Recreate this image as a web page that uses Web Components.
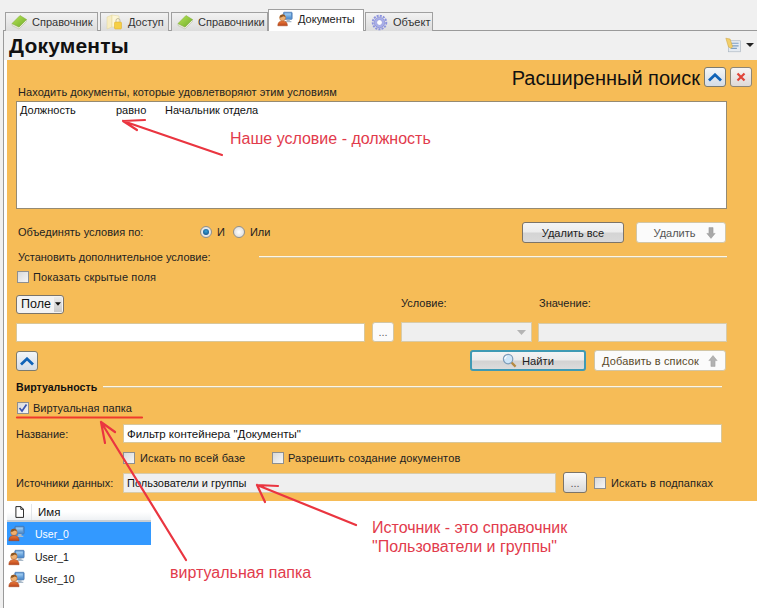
<!DOCTYPE html>
<html><head><meta charset="utf-8"><style>
html,body{margin:0;padding:0;background:#fff}
body{width:757px;height:608px;overflow:hidden;position:relative;font:11px "Liberation Sans",Arial,sans-serif;color:#222}
</style></head><body>
<x-app></x-app>
<script>
const USER=(w,h)=>`<svg width="${w}" height="${h}" viewBox="0 0 20 19"><defs><linearGradient id="sc" x1="0" y1="0" x2="0" y2="1"><stop offset="0" stop-color="#a8d3f5"/><stop offset="1" stop-color="#4f8fd0"/></linearGradient><linearGradient id="bd" x1="0" y1="0" x2="0" y2="1"><stop offset="0" stop-color="#ec7b3c"/><stop offset="1" stop-color="#b8441a"/></linearGradient></defs><rect x="8" y="1" width="11" height="9" rx="1" fill="#5d93cf" stroke="#3b6ea8" stroke-width=".7"/><rect x="9.500" y="2.500" width="8" height="6" fill="url(#sc)"/><path d="M12 10h4v2h2v1.500H10V12h2z" fill="#a9b9c8"/><circle cx="7" cy="8" r="3.800" fill="#efb071" stroke="#b4652a" stroke-width=".6"/><path d="M3.200 7.500A3.800 3.800 0 0 1 10.700 7L8 6 5 7.500z" fill="#8a5522"/><path d="M1 18c0-4.500 2.500-6 6-6s6 1.500 6 6z" fill="url(#bd)" stroke="#a4431a" stroke-width=".6"/></svg>`;
const ICON={
 book:`<svg width="16" height="16" viewBox="0 0 16 16"><defs><linearGradient id="gb" x1="0" y1="0" x2="1" y2="1"><stop offset="0" stop-color="#b9e457"/><stop offset="1" stop-color="#6fae2a"/></linearGradient></defs><path d="M1 9.500v2l7 3.500 7.500-7.500V5.500L8 13z" fill="#e9ecd9" stroke="#b3b9a0" stroke-width=".5"/><path d="M1 9.500 9 1.500l6.500 4L8 13z" fill="url(#gb)" stroke="#7cab33" stroke-width=".5"/></svg>`,
 key:`<svg width="17" height="18" viewBox="0 0 17 18"><path d="M1 4 6 2v12l-5 2z" fill="#f8edc2" stroke="#e3d499" stroke-width=".5"/><path d="M6 2l7 1v11l-7 0z" fill="#fdf6d6" stroke="#e3d499" stroke-width=".5"/><rect x="8.500" y="9" width="7" height="7" rx="1" fill="#f6cf45" stroke="#dba925" stroke-width=".5"/><path d="M10 9V7.500a2 2 0 0 1 4 0V9" fill="none" stroke="#c4bd9f" stroke-width="1"/></svg>`,
 user:USER(16,16),
 gear:`<svg width="17" height="17" viewBox="0 0 18 18"><circle cx="9" cy="9" r="7.200" fill="none" stroke="#8c92de" stroke-width="2" stroke-dasharray="2.200 1.200"/><circle cx="9" cy="9" r="5.600" fill="#a9afea" stroke="#777dcc" stroke-width=".6"/><circle cx="9" cy="9" r="3" fill="#fdfdff" stroke="#8388d0" stroke-width=".6"/></svg>`,
 up:`<svg width="14" height="9" viewBox="0 0 14 9"><path d="M1 7.500 7 1.800l6 5.700" fill="none" stroke="#0f63b8" stroke-width="2.800" stroke-linejoin="miter"/></svg>`,
 close:`<svg width="10" height="10" viewBox="0 0 10 10"><path d="M1.500 1.500l7 7M8.500 1.500l-7 7" stroke="#e0453a" stroke-width="2.200"/></svg>`,
 down:`<svg width="10" height="14" viewBox="0 0 12 15"><path d="M3.500 1h5v7h2.500l-5 6-5-6h2.500z" fill="#a8a8a8" stroke="#8f8f8f" stroke-width=".5"/></svg>`,
 upg:`<svg width="10" height="14" viewBox="0 0 12 15"><path d="M3.500 14h5V7h2.500L6 1 1 7h2.500z" fill="#b2b2b2" stroke="#979797" stroke-width=".5"/></svg>`,
 mag:`<svg width="15" height="15" viewBox="0 0 16 16"><circle cx="6.500" cy="6.500" r="5" fill="#cfe6f8" stroke="#7d9cb8" stroke-width="1.300"/><path d="M5 3.500a3.500 3.500 0 0 0-2 3" fill="none" stroke="#fff" stroke-width="1.200"/><path d="M10.300 10.300 14.500 14.500" stroke="#b58a42" stroke-width="2.400"/></svg>`,
 doc:`<svg width="9" height="12" viewBox="0 0 10 13"><path d="M1 .5h5.500L9.500 3.500V12.500H1z" fill="#fff" stroke="#111"/><path d="M6.500.5v3h3" fill="none" stroke="#111"/></svg>`,
 note:`<svg width="17" height="16" viewBox="0 0 20 18"><rect x="4" y="4" width="14" height="13" fill="#e5ebf1" stroke="#a5b1bd" stroke-width=".7"/><path d="M7 7h9M7 10h9M7 13h7" stroke="#7da0c4" stroke-width="1.300"/><path d="M1 1l5 1 3 9-2 2-3-2z" fill="#f2cf6a" stroke="#cda23e" stroke-width=".6"/></svg>`
};
function el(name,css,html,render){
 customElements.define(name,class extends HTMLElement{
  connectedCallback(){
   if(this.shadowRoot)return;
   const s=this.attachShadow({mode:"open"});
   s.innerHTML=`<style>${css}</style>`+(render?render(this):html);
  }
 });
}
el("x-tab",`:host{display:flex;align-items:center;box-sizing:border-box;height:19px;padding-left:5px;gap:5px;border:1px solid #a0a0a0;border-bottom:0;background:linear-gradient(#f2f2f2,#dcdcdc);color:#333;font-size:11px;position:relative}
:host([active]){height:22px;background:#fff;color:#222;padding-bottom:3px;padding-left:8px;gap:5px;z-index:1}
svg{flex:none}`,"",h=>ICON[h.getAttribute("icon")]+`<span><slot></slot></span>`);
el("x-btn",`:host{display:inline-flex;align-items:center;justify-content:center;box-sizing:border-box;gap:var(--g,8px);border:1px solid #a9a9a9;border-radius:3px;background:linear-gradient(#fdfdfd,#f1f1f1);color:#444;font-size:11px;flex:none}
:host([v=dark]){border-color:#7c7468;background:linear-gradient(#f4f4f4 0,#ececec 48%,#d4d4d4 52%,#d9d9d9);color:#222}
:host([v=focus]){border:2px solid #3f9ab4;background:linear-gradient(#f4f4f4 0,#ececec 48%,#d2d2d2 52%,#dcdcdc);color:#222}
:host([v=light]){border-color:#d2c6a6;background:#fbfbfb;color:#555}
:host([v=icon]){border-color:#7b7b6f;background:linear-gradient(#f3f6f9,#d4dce6)}
:host([v=iconx]){border-color:#8d8677;background:linear-gradient(#f7f5f4,#ded9d8)}
:host([v=dots]){border-color:#7c7468;background:linear-gradient(#fafafa,#d9d9d9)}
span{white-space:nowrap}`,`<slot></slot>`);
el("x-check",`:host{display:inline-flex;align-items:center;gap:var(--cg,4px);color:#222;white-space:nowrap;letter-spacing:var(--cs,.12px)}
i{box-sizing:border-box;width:12px;height:12px;border:1px solid #8e8f8f;background:linear-gradient(135deg,#d9d9d9,#f6f6f6);display:flex;flex:none;align-items:center;justify-content:center}`,"",
h=>`<i>${h.hasAttribute("checked")?`<svg width="10" height="10" viewBox="0 0 10 10"><path d="M1.500 5 4 8l4.500-6.500" fill="none" stroke="#3a55b0" stroke-width="1.700"/></svg>`:""}</i><span><slot></slot></span>`);
el("x-radio",`:host{display:inline-flex;align-items:center;gap:5px;color:#222}
i{box-sizing:border-box;width:12px;height:12px;border-radius:50%;border:1px solid #8e8f8f;background:radial-gradient(#fff,#d5d5d5);display:flex;align-items:center;justify-content:center}
b{width:6px;height:6px;border-radius:50%;background:radial-gradient(circle at 50% 40%,#38a3d8,#0b3f7a)}`,"",
h=>`<i>${h.hasAttribute("checked")?"<b></b>":""}</i><span><slot></slot></span>`);
el("x-field",`:host{display:flex;align-items:center;box-sizing:border-box;border:1px solid #d9c79a;background:#fff;padding:0 3px;color:#222;white-space:nowrap;height:19px;flex:none}
:host([off]){background:#efefef;border-color:#d8cba9}`,`<slot></slot>`);
el("x-row",`:host{display:flex;align-items:center;box-sizing:border-box;white-space:nowrap}`,`<slot></slot>`);
el("x-rule",`:host{display:block;height:2px;flex:none;background:#fdf6e6;border-bottom:1px solid #d8c595;box-sizing:border-box}`,``);
el("x-search",`:host{display:block;box-sizing:border-box;width:750px;height:441px;background:#f6bc57;padding:7px 0 0 9px;color:#222}
.title{font-size:20px;color:#111;margin-left:auto;margin-right:4px;line-height:23px}
.list{box-sizing:border-box;width:711px;height:108px;background:#fff;border:1px solid #958a72;padding:2px 3px;position:relative;color:#111;display:flex;align-items:flex-start}
.list span{display:inline-block;flex:none}
.sp{flex:1}
.drop{width:9px;height:15px;background:linear-gradient(#ececec,#c9c9c9);display:flex;align-items:center;justify-content:center;margin-left:auto}
`,`
<x-row style="height:23px;margin-bottom:-4px;width:736px;align-items:flex-start"><span class="title">Расширенный поиск</span><x-btn v="icon" style="width:22px;height:20px">${ICON.up}</x-btn><x-btn v="iconx" style="width:22px;height:20px;margin-left:4px">${ICON.close}</x-btn></x-row>
<x-row style="height:12px;padding-left:2px;margin-bottom:3px;letter-spacing:.07px"><span>Находить документы, которые удовлетворяют этим условиям</span></x-row>
<div class="list"><span style="width:96px">Должность</span><span style="width:49px">равно</span><span>Начальник отдела</span></div>
<x-row style="height:21px;margin-top:13px;width:710px;padding-left:2px"><span style="width:182px;margin-top:-2px">Объединять условия по:</span><x-radio checked style="margin-top:-2px">И</x-radio><x-radio style="margin:-2px 0 0 8px">Или</x-radio><span class="sp"></span><x-btn v="dark" style="width:102px;height:21px">Удалить все</x-btn><x-btn v="light" style="width:90px;height:21px;margin-left:12px;--g:10px;padding-left:7px">Удалить ${ICON.down}</x-btn></x-row>
<x-row style="height:14px;margin-top:7px;width:711px;padding-left:2px"><span style="width:241px">Установить дополнительное условие:</span><x-rule style="flex:1"></x-rule></x-row>
<x-row style="height:14px;margin-top:6px;padding-left:1px"><x-check>Показать скрытые поля</x-check></x-row>
<x-row style="height:20px;margin-top:10px"><x-btn v="dark" style="width:48px;height:19px;background:#f3f3f3;font-size:12.500px;color:#111;justify-content:flex-start;padding:0 1px 0 4px;gap:3px">Поле <span class="drop"><svg width="6" height="4" viewBox="0 0 7 4"><path d="M0 0h7L3.500 4z" fill="#111"/></svg></span></x-btn><span style="margin:0 0 3px 337px;width:138px">Условие:</span><span style="margin-bottom:3px">Значение:</span></x-row>
<x-row style="height:20px;margin-top:8px"><x-field style="width:349px;height:19px"></x-field><x-btn v="light" style="width:22px;height:20px;margin-left:7px;color:#666">...</x-btn><x-field off style="width:131px;height:20px;margin-left:7px;justify-content:flex-end;padding-right:5px"><svg width="9" height="5" viewBox="0 0 9 5"><path d="M0 0h9L4.500 5z" fill="#b4b4b4"/></svg></x-field><x-field off style="width:189px;height:19px;margin-left:6px"></x-field></x-row>
<x-row style="height:21px;margin-top:8px;width:710px"><x-btn v="icon" style="width:22px;height:20px;margin-top:1px">${ICON.up}</x-btn><span class="sp"></span><x-btn v="focus" style="width:116px;height:21px;--g:5px;font-size:11.200px">${ICON.mag}Найти</x-btn><x-btn v="light" style="width:132px;height:21px;margin-left:8px;--g:9px;color:#5a4a2a;letter-spacing:.12px">Добавить в список ${ICON.upg}</x-btn></x-row>
<x-row style="height:14px;margin-top:9px;width:706px"><b style="width:87px;font-size:10.600px;color:#111">Виртуальность</b><x-rule style="flex:1"></x-rule></x-row>
<x-row style="height:14px;margin-top:7px;padding-left:1px"><x-check checked style="--cs:.02px">Виртуальная папка</x-check></x-row>
<x-row style="height:19px;margin-top:9px"><span style="width:107px">Название:</span><x-field style="width:599px;height:19px;color:#111;font-size:11.500px">Фильтр контейнера "Документы"</x-field></x-row>
<x-row style="height:14px;margin-top:8px;padding-left:107px"><x-check style="width:149px;--cg:5px">Искать по всей базе</x-check><x-check>Разрешить создание документов</x-check></x-row>
<x-row style="height:21px;margin-top:7px"><span style="width:107px">Источники данных:</span><x-field off style="width:433px;height:20px;color:#111">Пользователи и группы</x-field><x-btn v="dots" style="width:24px;height:21px;margin-left:7px;color:#555">...</x-btn><x-check style="margin-left:7px;--cg:5px">Искать в подпапках</x-check></x-row>
`);
el("x-list",`:host{display:block;width:144px;margin:1px 0 0 3px;color:#111}
.h{display:flex;align-items:center;height:20px;box-sizing:border-box;background:linear-gradient(#fff 55%,#eef1f4);border-bottom:2px solid #c9ced4;font-size:11.500px;padding-top:2px}
.h .a{width:25px;padding-left:8px;box-sizing:border-box;display:flex;border-right:1px solid #e2e5e8;height:16px;align-items:center;margin-right:6px}
.r{display:flex;align-items:center;height:22px;padding-left:1px;gap:10px;font-size:10.500px}
.sel{background:#3399ff;color:#fff;height:23px;margin-bottom:1px}`,`
<div class="h"><div class="a">${ICON.doc}</div>Имя</div>
<div class="r sel">${USER(17,17)}<span>User_0</span></div>
<div class="r">${USER(17,17)}<span>User_1</span></div>
<div class="r">${USER(17,17)}<span>User_10</span></div>`);
el("x-notes",`:host{position:absolute;inset:0;display:block;pointer-events:none;z-index:5}
svg{position:absolute;left:0;top:0}
span{position:absolute;color:#e23b4c;font-size:16px;line-height:19px;white-space:nowrap}`,`
<svg width="757" height="608" fill="none" stroke="#ea3540" stroke-width="2.200" stroke-linecap="round">
<path d="M222 155 123 121M123 121l22-1M123 121l14 9"/>
<path d="M17 417.500H142" stroke="#ef3a2c"/>
<path d="M186 560 101 422M101 422l14 10M101 422l4 21"/>
<path d="M356 525 257 485M257 485l21 1M257 485l8 17"/>
</svg>
<span style="left:230px;top:129px">Наше условие - должность</span>
<span style="left:372px;top:518px">Источник - это справочник</span>
<span style="left:372px;top:537px">"Пользователи и группы"</span>
<span style="left:170px;top:563px">виртуальная папка</span>`);
el("x-app",`:host{display:block;width:757px;height:608px;position:relative;background:linear-gradient(to right,#f0f0f0 3px,#fff 3px)}
.tabs{height:31px;background:#f0f0f0;display:flex;align-items:flex-end;padding-left:2px;margin-left:3px;box-sizing:border-box;border-bottom:1px solid #9a9a9a}
.tabs x-tab{margin-bottom:-1px}
.body{display:flex;border-left:1px solid #9a9a9a;margin-left:3px;height:577px}
.main{flex:1;min-width:0}
.head{height:29px;background:#f0f0f0;display:flex;align-items:center;justify-content:space-between;padding:1px 3px 0 5px;box-sizing:border-box}
h1{margin:0;font-size:21px;font-weight:700;color:#111;letter-spacing:.2px}
x-search{margin-left:3px}
.menu{display:flex;align-items:center;gap:4px;margin-top:-3px}`,`
<div class="tabs"><x-tab icon="book" style="width:93px;margin-right:2px">Справочник</x-tab><x-tab icon="key" style="width:69px;margin-right:2px">Доступ</x-tab><x-tab icon="book" style="width:97px">Справочники</x-tab><x-tab active icon="user" style="width:96px;margin-right:1px">Документы</x-tab><x-tab icon="gear" style="width:68px">Объект</x-tab></div>
<div class="body"><div class="main">
<div class="head"><h1>Документы</h1><div class="menu">${ICON.note}<svg width="8" height="4" viewBox="0 0 8 4"><path d="M0 0h8L4 4z" fill="#222"/></svg></div></div>
<x-search></x-search>
<x-list></x-list>
</div></div>
<x-notes></x-notes>`);
</script>
</body></html>
